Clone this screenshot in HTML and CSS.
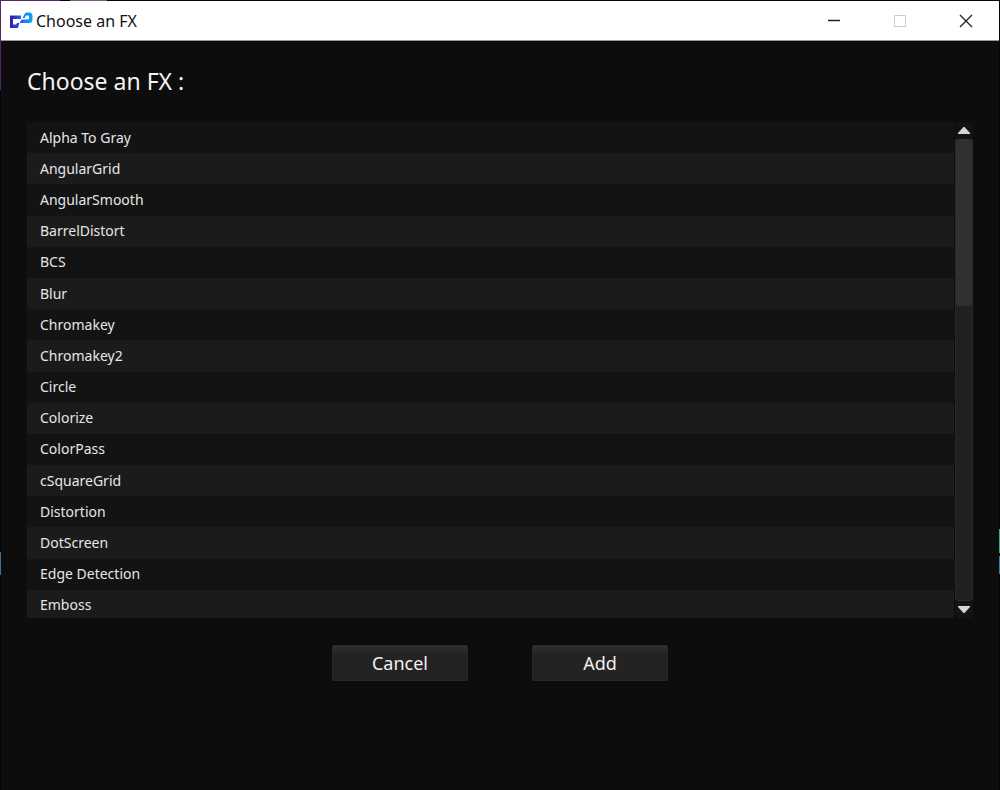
FILE: index.html
```html
<!DOCTYPE html>
<html lang="en">
<head>
<meta charset="utf-8">
<title>Choose an FX</title>
<link rel="stylesheet" href="styles.css">
</head>
<body>
<div class="window">
  <header class="titlebar">
    <svg class="logo" width="24" height="18" viewBox="0 0 24 18" aria-hidden="true">
      <defs>
        <linearGradient id="logo-left" x1="0" x2="1"><stop offset="0" stop-color="#3218b4"/><stop offset="1" stop-color="#2463ee"/></linearGradient>
        <linearGradient id="logo-right" x1="0" x2="1"><stop offset="0" stop-color="#2a5cf0"/><stop offset="1" stop-color="#08a8ff"/></linearGradient>
      </defs>
      <path d="M1 3.500H12V7H4V12.500H7L8 11H10.500L9 16H1Z" fill="url(#logo-left)"/>
      <path d="M10.500 11L12.500 7.500H19Q20 7.500 20 6.500V4.500Q20 3.500 19 3.500H17L15.500 6H13.500L16 1.500Q16.500 0.500 18 0.500H20Q23.500 0.500 23.500 4V7.500Q23.500 11 20 11Z" fill="url(#logo-right)"/>
    </svg>
    <span class="title">Choose an FX</span>
    <button class="control" aria-label="Minimize"><svg width="14" height="14" viewBox="0 0 14 14"><path d="M1 6.500H13" stroke="#222" stroke-width="1.500"/></svg></button>
    <button class="control" aria-label="Maximize" disabled><svg width="14" height="14" viewBox="0 0 14 14"><path d="M1.500 1.500H12.500V12.500H1.500Z" fill="none" stroke="#ccc"/></svg></button>
    <button class="control" aria-label="Close"><svg width="14" height="14" viewBox="0 0 14 14"><path d="M1 1L13 13M13 1L1 13" stroke="#222" stroke-width="1.300"/></svg></button>
  </header>
  <main class="content">
    <h1 class="heading">Choose an FX :</h1>
    <div class="panel">
      <div class="viewport">
        <ul class="list">
          <li class="item">Alpha To Gray</li>
          <li class="item">AngularGrid</li>
          <li class="item">AngularSmooth</li>
          <li class="item">BarrelDistort</li>
          <li class="item">BCS</li>
          <li class="item">Blur</li>
          <li class="item">Chromakey</li>
          <li class="item">Chromakey2</li>
          <li class="item">Circle</li>
          <li class="item">Colorize</li>
          <li class="item">ColorPass</li>
          <li class="item">cSquareGrid</li>
          <li class="item">Distortion</li>
          <li class="item">DotScreen</li>
          <li class="item">Edge Detection</li>
          <li class="item">Emboss</li>
        </ul>
      </div>
      <div class="scrollbar">
        <button class="arrow" aria-label="Scroll up"><svg width="12" height="8" viewBox="0 0 12 8"><path d="M5.500 0H6.500L12 6V7H0V6Z" fill="#d4d4d4"/></svg></button>
        <div class="track"><div class="thumb"></div></div>
        <button class="arrow" aria-label="Scroll down"><svg width="12" height="8" viewBox="0 0 12 8"><path d="M0 0H12V1L6.500 7H5.500L0 1Z" fill="#d4d4d4"/></svg></button>
      </div>
    </div>
    <div class="actions">
      <button class="action">Cancel</button>
      <button class="action">Add</button>
    </div>
  </main>
</div>
</body>
</html>
```
FILE: styles.css
```css
* { box-sizing: border-box; }

body {
  margin: 0;
  min-height: 100vh;
  padding: 1px 1px 0;
  display: flex;
  background-color: #050505;
  background-image:
    linear-gradient(#54246c, #54246c),
    linear-gradient(#3c7096, #3c7096),
    linear-gradient(#3fa98a 24px, #050505 24px, #050505 27px, #3d7f9c 27px),
    linear-gradient(90deg, #54246c 60px, #050505 60px, #050505 70px, #7a5a80 70px, #7a5a80 107px, #050505 107px);
  background-repeat: no-repeat;
  background-position: 0 0, 0 552px, 100% 529px, 0 0;
  background-size: 1px 90px, 1px 23px, 1px 45px, 100% 1px;
  font-family: "Noto Sans", "Open Sans", sans-serif;
}

button {
  margin: 0;
  padding: 0;
  border: 0;
  font: inherit;
}

.window {
  flex: 1;
  background: #0d0d0d;
}

.titlebar {
  display: flex;
  align-items: center;
  height: 40px;
  padding-left: 8px;
  background: #fff;
  border-bottom: 1px solid #999;
}

.logo { flex: none; }

.title {
  flex: 1;
  margin-left: 3px;
  font-size: 16px;
  line-height: 24px;
  color: #111;
}

.control {
  display: flex;
  align-items: center;
  justify-content: center;
  width: 66px;
  height: 38px;
  background: transparent;
}

.content { padding: 22px 26px; }

.heading {
  margin: 0 0 23px;
  font-size: 23px;
  line-height: 36px;
  font-weight: 400;
  color: #f4f4f4;
}

.panel {
  display: flex;
  gap: 1px;
  height: 496px;
}

.viewport {
  flex: 1;
  overflow: hidden;
}

.list {
  display: grid;
  grid-template-rows: repeat(16, 1fr);
  height: 499px;
  margin: 0;
  padding: 0;
  list-style: none;
}

.item {
  display: flex;
  align-items: center;
  padding-left: 13px;
  background: #131313;
  color: #e6e6e6;
  font-size: 14px;
  line-height: 20px;
}

.item:nth-child(even) { background: #1b1b1b; }

.scrollbar {
  display: flex;
  flex-direction: column;
  width: 18px;
}

.arrow {
  display: flex;
  align-items: center;
  justify-content: center;
  height: 17px;
  border-radius: 3px;
  background: #131313;
}

.track {
  flex: 1;
  border: 1px solid #2a2a2a;
  border-top: 0;
  border-radius: 0 0 3px 3px;
  background: #202020;
}

.thumb {
  height: 167px;
  border-radius: 4px;
  background: #303030;
}

.actions {
  display: flex;
  justify-content: center;
  gap: 64px;
  margin-top: 27px;
}

.action {
  width: 136px;
  height: 36px;
  border: 1px solid #292929;
  border-radius: 2px;
  background: linear-gradient(#303030, #232323 8px);
  color: #f0f0f0;
  font-size: 18px;
  line-height: 32px;
}
```
